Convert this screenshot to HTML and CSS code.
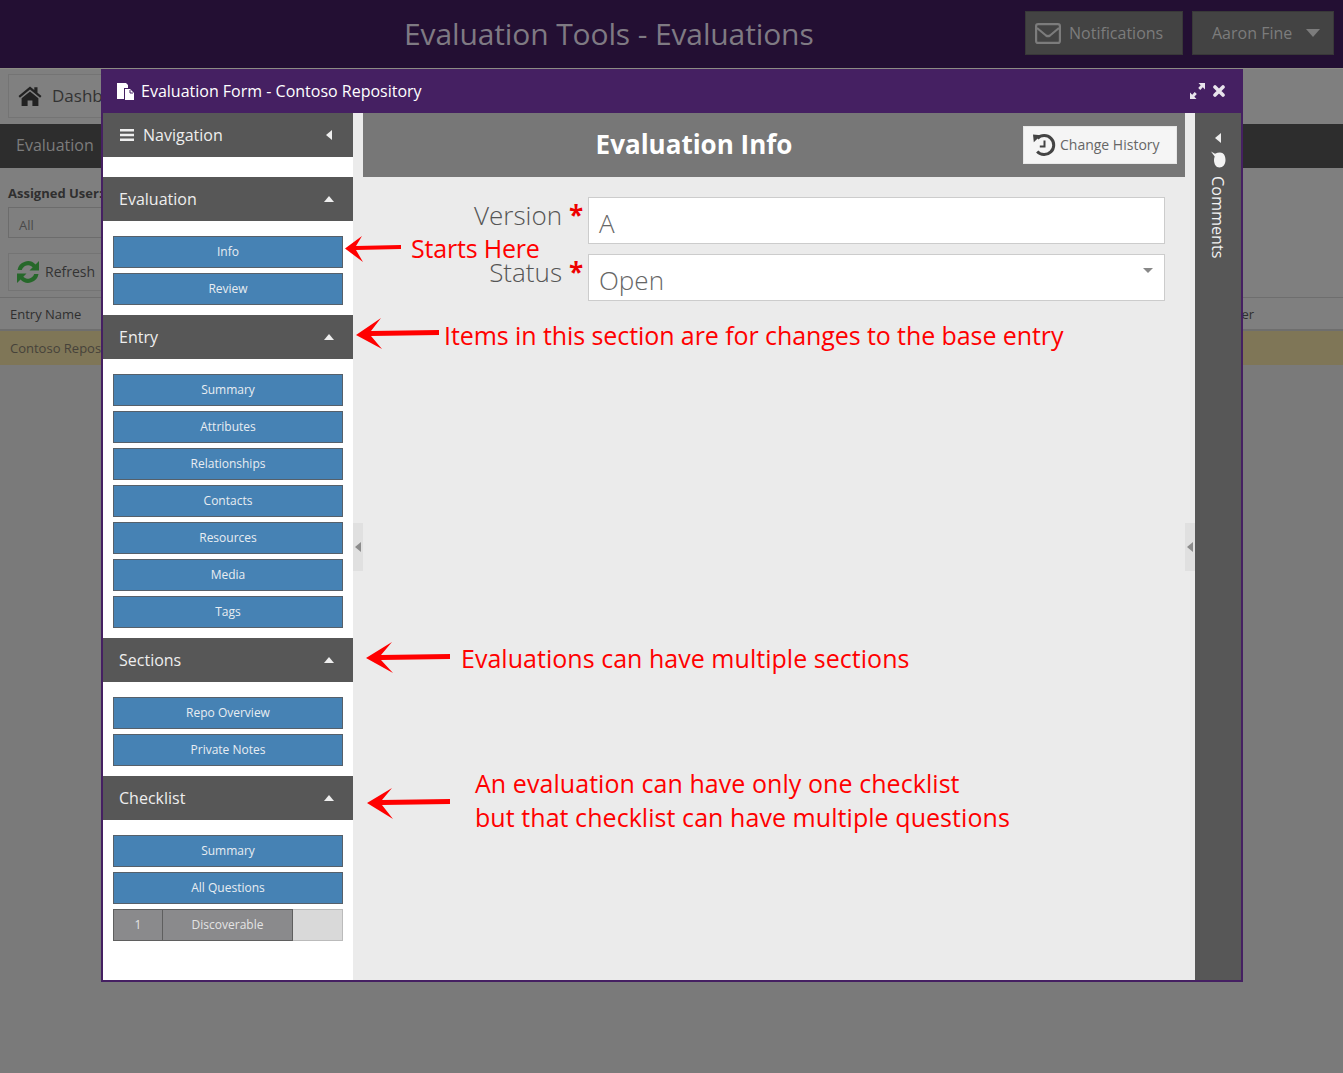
FILE: index.html
```html
<!DOCTYPE html>
<html lang="en">
<head>
  <meta charset="UTF-8" />
  <title>Evaluation Tools - Evaluations</title>
  <link rel="stylesheet" href="styles.css">
</head>
<body>
  <header class="topbar">
    <h1>Evaluation Tools - Evaluations</h1>
    <div class="top-actions">
      <button class="top-btn notify">
        <svg width="26" height="21" viewBox="0 0 26 21"><rect x="1.100" y="1.100" width="23.800" height="18.800" rx="2" fill="none" stroke="currentColor" stroke-width="2.200"/><path d="M2 5l9 7.500q2 1.400 4 0L24 5" fill="none" stroke="currentColor" stroke-width="2.200"/></svg>
        <span>Notifications</span>
      </button>
      <button class="top-btn user"><span>Aaron Fine</span> <i class="caret"></i></button>
    </div>
  </header>

  <div class="page">
    <div class="dash-row">
      <button class="ghost-btn dash">
        <svg width="24" height="20" viewBox="0 0 24 20"><path d="M12 0.500L0.500 10l1.400 1.700L12 3.400l10.100 8.300 1.400-1.700-4-3.300V1.200h-3.200v2.800z" fill="#222"/><path d="M3.600 12.200L12 5.400l8.400 6.800V20h-6v-5.600H9.600V20h-6z" fill="#222"/></svg>
        <span>Dashboard</span>
      </button>
    </div>
    <div class="tab-band">Evaluation</div>
    <div class="filters">
      <label>Assigned User:</label>
      <div class="fake-select">All</div>
    </div>
    <div class="refresh-row">
      <button class="ghost-btn refresh">
        <svg width="24" height="24" viewBox="0 0 24 24"><path d="M1.500 10A10.500 10.500 0 0 1 19.500 4.500L23 1v9.500h-9.500l3.200-3.200a6.500 6.500 0 0 0-10.900 2.700z" fill="#26682a"/><path d="M22.500 14A10.500 10.500 0 0 1 4.500 19.500L1 23v-9.500h9.500l-3.200 3.200a6.500 6.500 0 0 0 10.900-2.700z" fill="#26682a"/></svg>
        <span>Refresh</span>
      </button>
    </div>
    <div class="grid-head"><span>Entry Name</span><span class="last-col">Assigned User</span></div>
    <div class="grid-row">Contoso Repository</div>
  </div>

  <section class="win">
    <div class="win-title">
      <svg class="win-doc" width="17" height="17" viewBox="0 0 17 17"><path d="M0 0h9l2 2v3H7v11H0z" fill="#fff"/><path d="M8 6h5l4 4v7H8z" fill="#fff"/><path d="M13 7v3h3" fill="none" stroke="#452062" stroke-width="1"/></svg>
      <span>Evaluation Form - Contoso Repository</span>
      <div class="win-tools">
        <svg width="15" height="16" viewBox="0 0 15 16"><path d="M8.500 0H15v6.500l-2.200-2.200-2.500 2.700-2.100-2.100 2.500-2.700zM0 16V9.500l2.200 2.200 2.500-2.700 2.100 2.100-2.500 2.700L6.500 16z" fill="#e8e4ec"/></svg>
        <svg width="12" height="12" viewBox="0 0 12 12"><path d="M2 2l8 8M10 2l-8 8" stroke="#e8e4ec" stroke-width="3.600" stroke-linecap="round"/></svg>
      </div>
    </div>
    <div class="win-body">
      <aside class="nav">
        <div class="nav-head nav-top">
          <svg width="14" height="12" viewBox="0 0 14 12"><path d="M0 0h14v2.500H0zM0 4.700h14v2.500H0zM0 9.400h14v2.500H0z" fill="#eee"/></svg>
          <span>Navigation</span>
          <i class="tri-left"></i>
        </div>
        <div class="nav-head"><span>Evaluation</span><i class="tri-up"></i></div>
        <div class="nav-list">
          <button class="nav-btn">Info</button>
          <button class="nav-btn">Review</button>
        </div>
        <div class="nav-head"><span>Entry</span><i class="tri-up"></i></div>
        <div class="nav-list">
          <button class="nav-btn">Summary</button>
          <button class="nav-btn">Attributes</button>
          <button class="nav-btn">Relationships</button>
          <button class="nav-btn">Contacts</button>
          <button class="nav-btn">Resources</button>
          <button class="nav-btn">Media</button>
          <button class="nav-btn">Tags</button>
        </div>
        <div class="nav-head"><span>Sections</span><i class="tri-up"></i></div>
        <div class="nav-list">
          <button class="nav-btn">Repo Overview</button>
          <button class="nav-btn">Private Notes</button>
        </div>
        <div class="nav-head"><span>Checklist</span><i class="tri-up"></i></div>
        <div class="nav-list">
          <button class="nav-btn">Summary</button>
          <button class="nav-btn">All Questions</button>
          <div class="q-row">
            <span class="q-num">1</span>
            <span class="q-name">Discoverable</span>
            <span class="q-rest"></span>
          </div>
        </div>
      </aside>

      <main class="content">
        <div class="handle handle-l"><i></i></div>
        <div class="handle handle-r"><i></i></div>
        <div class="content-head">
          <h2>Evaluation Info</h2>
          <button class="history-btn">
            <svg width="24" height="24" viewBox="0 0 24 24"><path d="M5.400 5.400A9.500 9.500 0 1 1 5.200 18.400" fill="none" stroke="#444" stroke-width="3"/><path d="M1 1.500l8 .8-7.200 7z" fill="#444"/><path d="M12.500 7.500v6H7.800" fill="none" stroke="#444" stroke-width="2"/></svg>
            <span>Change History</span>
          </button>
        </div>
        <form class="form">
          <div class="form-row">
            <label>Version</label><b class="req">*</b>
            <div class="field">A</div>
          </div>
          <div class="form-row">
            <label>Status</label><b class="req">*</b>
            <div class="field">Open<i class="field-caret"></i></div>
          </div>
        </form>
      </main>

      <aside class="comments">
        <i class="tri-left"></i>
        <svg width="16" height="17" viewBox="0 0 16 17"><path d="M1 0.500l4 2.200Q7.500 1.500 10 1.500c3.500 0 5.500 3 5.500 7.500S13 16.500 9.500 16.500 4 13 4 9q0-2 .7-3.500z" fill="#f2f2f2"/></svg>
        <span>Comments</span>
      </aside>
    </div>
  </section>

  <svg class="arrows" width="1343" height="1073" viewBox="0 0 1343 1073">
    <path d="M345 248.500L362 236 356 246 401 245v4l-45 1 7 12z" fill="#f00"/>
    <path d="M356 335L381 318 371 331 439 330v5l-68 1 11 13z" fill="#f00"/>
    <path d="M366 658L392 642 381 655 450 654v5l-69 1 12 13z" fill="#f00"/>
    <path d="M367 803L392 788 382 800 450 799v5l-68 1 11 14z" fill="#f00"/>
  </svg>
  <div class="note note-start">Starts Here</div>
  <div class="note note-entry">Items in this section are for changes to the base entry</div>
  <div class="note note-sections">Evaluations can have multiple sections</div>
  <div class="note note-check">An evaluation can have only one checklist<br>but that checklist can have multiple questions</div>
</body>
</html>
```

FILE: styles.css
```css
html, body {
  height: 100%;
}
body {
  margin: 0;
  background: #7a7a7a;
  font-family: "Open Sans", sans-serif;
  color: #2f2f2f;
  overflow: hidden;
  position: relative;
}
button {
  font-family: inherit;
}
.topbar {
  height: 68px;
  background: #230f33;
  border-bottom: 1px solid #8c8c84;
  display: flex;
  align-items: center;
  position: relative;
}
.topbar h1 {
  margin: -2px 0 0 404px;
  font-size: 30px;
  font-weight: 400;
  letter-spacing: -0.12px;
  color: #7f7a83;
  white-space: nowrap;
}
.top-actions {
  margin-left: auto;
  margin-right: 9px;
  margin-top: -2px;
  display: flex;
  gap: 9px;
}
.top-btn {
  height: 44px;
  background: #434343;
  border: 1px solid #383838;
  color: #7c7c7c;
  font-size: 16px;
  display: flex;
  align-items: center;
  padding: 0;
}
.notify {
  width: 158px;
  padding-left: 9px;
  gap: 8px;
}
.user {
  width: 142px;
  padding-left: 19px;
}
.caret {
  width: 0;
  height: 0;
  margin-left: 14px;
  border-left: 7px solid transparent;
  border-right: 7px solid transparent;
  border-top: 8px solid #7c7c7c;
}

.page {
  background: #7f7f7f;
}
.dash-row {
  height: 55px;
  padding: 5px 8px 0;
  box-sizing: border-box;
}
.ghost-btn {
  background: #808080;
  border: 1px solid #747474;
  color: #333;
  display: flex;
  align-items: center;
}
.ghost-btn span {
  margin-top: -2px;
}
.dash {
  width: 140px;
  height: 44px;
  padding-left: 9px;
  gap: 10px;
  font-size: 17px;
}
.tab-band {
  height: 44px;
  line-height: 42px;
  background: #2d2d2d;
  color: #7c7c7c;
  font-size: 16px;
  padding-left: 16px;
}
.filters {
  height: 85px;
  padding: 16px 8px 0;
  box-sizing: border-box;
}
.filters label {
  display: block;
  font-weight: 700;
  font-size: 13px;
  line-height: 18px;
}
.fake-select {
  width: 200px;
  height: 31px;
  line-height: 34px;
  margin-top: 5px;
  border: 1px solid #6c6c6c;
  box-sizing: border-box;
  padding-left: 10px;
  font-size: 13px;
  color: #4a4a4a;
}
.refresh-row {
  height: 44px;
  padding: 0 8px;
}
.refresh {
  width: 130px;
  height: 38px;
  padding-left: 7px;
  gap: 5px;
  font-size: 14px;
}
.grid-head {
  height: 34px;
  line-height: 33px;
  box-sizing: border-box;
  border-top: 1px solid #6e6e6e;
  border-bottom: 2px solid #6e6e6e;
  padding: 0 10px;
  font-size: 13px;
  display: flex;
  justify-content: space-between;
}
.last-col {
  margin-right: 79px;
}
.grid-row {
  height: 34px;
  line-height: 34px;
  background: #7f7657;
  padding-left: 10px;
  font-size: 13px;
  color: #46423a;
}

/* evaluation window */
.win {
  position: absolute;
  left: 101px;
  top: 69px;
  width: 1142px;
  height: 913px;
  box-sizing: border-box;
  border: 2px solid #452062;
  border-top: 0;
  display: flex;
  flex-direction: column;
  background: #fff;
}
.win-title {
  height: 44px;
  flex: none;
  margin: 0 -2px;
  padding: 0 18px 0 16px;
  background: #452062;
  color: #fff;
  font-size: 16px;
  display: flex;
  align-items: center;
  gap: 7px;
}
.win-tools {
  margin-left: auto;
  display: flex;
  align-items: center;
  gap: 8px;
}
.win-body {
  flex: 1;
  display: flex;
  min-height: 0;
}
.nav {
  width: 250px;
  flex: none;
  background: #fff;
}
.nav-head {
  height: 44px;
  background: #575757;
  color: #eee;
  font-size: 16px;
  display: flex;
  align-items: center;
  padding: 0 19px 0 16px;
  justify-content: space-between;
}
.nav-head span {
  margin-top: -1px;
}
.nav-top {
  margin-bottom: 20px;
  padding-left: 17px;
  padding-right: 21px;
  justify-content: flex-start;
  gap: 9px;
}
.nav-top .tri-left {
  margin-left: auto;
}
.tri-up {
  width: 0;
  height: 0;
  border-left: 5px solid transparent;
  border-right: 5px solid transparent;
  border-bottom: 6px solid #eee;
}
.tri-left {
  width: 0;
  height: 0;
  border-top: 5px solid transparent;
  border-bottom: 5px solid transparent;
  border-right: 6px solid #eee;
}
.nav-list {
  padding: 15px 10px 10px;
  display: flex;
  flex-direction: column;
  gap: 5px;
}
.nav-btn {
  height: 32px;
  background: #4682b4;
  border: 1px solid #56606a;
  color: #e8edf2;
  font-size: 12px;
  padding: 0 0 2px;
}
.q-row {
  height: 32px;
  display: flex;
  font-size: 12px;
  color: #e4e4e4;
  line-height: 30px;
  text-align: center;
  box-sizing: border-box;
}
.q-num {
  width: 49px;
  background: #8a8a8c;
  border: 1px solid #5f5f5f;
  border-right: 0;
  box-sizing: border-box;
}
.q-name {
  width: 131px;
  background: #8a8a8c;
  border: 1px solid #5f5f5f;
  box-sizing: border-box;
}
.q-rest {
  flex: 1;
  background: #d9d9d9;
  border: 1px solid #bbb;
  border-left: 0;
}

.content {
  flex: 1;
  background: #ebebeb;
  padding: 0 10px;
  position: relative;
  min-width: 0;
}
.handle {
  position: absolute;
  top: 410px;
  width: 10px;
  height: 48px;
  background: #e0e0e0;
  display: flex;
  align-items: center;
  justify-content: center;
}
.handle i {
  width: 0;
  height: 0;
  border-top: 5px solid transparent;
  border-bottom: 5px solid transparent;
  border-right: 6px solid #8c8c8c;
}
.handle-l {
  left: 0;
}
.handle-r {
  right: 0;
}
.content-head {
  height: 64px;
  background: #777;
  position: relative;
  display: flex;
  align-items: center;
  justify-content: flex-end;
  padding-right: 8px;
}
.content-head h2 {
  position: absolute;
  left: 0;
  right: 0;
  margin: -2px 0 0;
  padding-right: 160px;
  text-align: center;
  color: #fff;
  font-size: 26px;
  font-weight: 700;
}
.history-btn {
  position: relative;
  width: 154px;
  height: 38px;
  background: #f5f5f5;
  border: 1px solid #e8e8e8;
  color: #666;
  font-size: 14px;
  display: flex;
  align-items: center;
  gap: 4px;
  padding: 0 0 0 8px;
}
.history-btn span {
  margin-top: -2px;
}
.form {
  padding: 20px 20px 0 0;
}
.form-row {
  display: flex;
  margin-bottom: 10px;
  height: 47px;
}
.form-row label {
  width: 199px;
  text-align: right;
  font-size: 26px;
  font-weight: 300;
  color: #555;
  line-height: 36px;
}
.req {
  width: 26px;
  padding-left: 7px;
  box-sizing: border-box;
  color: #e00;
  font-size: 26px;
  line-height: 36px;
}
.field {
  flex: 1;
  background: #fff;
  border: 1px solid #ccc;
  box-sizing: border-box;
  font-size: 26px;
  font-weight: 300;
  color: #666;
  line-height: 50px;
  padding-left: 10px;
  position: relative;
}
.field-caret {
  position: absolute;
  right: 11px;
  top: 13px;
  width: 0;
  height: 0;
  border-left: 5px solid transparent;
  border-right: 5px solid transparent;
  border-top: 5px solid #888;
}
.comments {
  width: 46px;
  flex: none;
  background: #575757;
  color: #f2f2f2;
  display: flex;
  flex-direction: column;
  align-items: center;
  padding-top: 20px;
  box-sizing: border-box;
  font-size: 16.200px;
}
.comments svg {
  margin: 8px 0 8px;
}
.comments span {
  writing-mode: vertical-rl;
}

/* screenshot annotations */
.arrows {
  position: absolute;
  left: 0;
  top: 0;
  pointer-events: none;
}
.note {
  position: absolute;
  color: #f00;
  font-size: 25px;
  line-height: 34px;
  white-space: nowrap;
}
.note-start {
  left: 411px;
  top: 231px;
  letter-spacing: -0.2px;
}
.note-entry {
  left: 444px;
  top: 318px;
  letter-spacing: -0.08px;
}
.note-sections {
  left: 461px;
  top: 641px;
  letter-spacing: 0.03px;
}
.note-check {
  left: 475px;
  top: 766px;
  letter-spacing: 0.06px;
}
```
